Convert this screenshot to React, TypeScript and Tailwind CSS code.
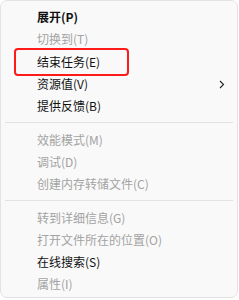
import React from "react";

type Item = { label: string; disabled?: boolean; bold?: boolean; sub?: boolean; boxed?: boolean } | "sep";

const items: Item[] = [
  { label: "展开(P)", bold: true },
  { label: "切换到(T)", disabled: true },
  { label: "结束任务(E)", boxed: true },
  { label: "资源值(V)", sub: true },
  { label: "提供反馈(B)" },
  "sep",
  { label: "效能模式(M)", disabled: true },
  { label: "调试(D)", disabled: true },
  { label: "创建内存转储文件(C)", disabled: true },
  "sep",
  { label: "转到详细信息(G)", disabled: true },
  { label: "打开文件所在的位置(O)", disabled: true },
  { label: "在线搜索(S)" },
  { label: "属性(I)", disabled: true },
];

export default function App() {
  return (
    <div className="w-[239px] h-[300px] bg-white" style={{ fontFamily: '"Noto Sans CJK SC", "Noto Sans", sans-serif' }}>
      <div className="w-[238px] h-[298px] rounded-[7px] border border-[#e3e3e3] bg-[#f9f9f9] pt-[5px] flex flex-col">
        {items.map((it, i) =>
          it === "sep" ? (
            <div key={i} className="h-[11px] flex items-center px-[4px]">
              <div className="h-px w-full bg-[#e2e2e2]" />
            </div>
          ) : (
            <div key={i} className="relative h-[22.3px] flex items-center pl-[36px] pr-[12px]">
              <span
                className={
                  "text-[12px] leading-none " +
                  (it.disabled ? "text-[#a3a3a3]" : "text-[#111]") +
                  (it.bold ? " font-bold" : "")
                }
              >
                {it.label}
              </span>
              {it.sub && (
                <svg className="absolute left-[218px] top-[7px]" width="6" height="9" viewBox="0 0 6 9">
                  <path d="M1 1 L4.5 4.5 L1 8" fill="none" stroke="#222" strokeWidth="1.1" />
                </svg>
              )}
              {it.boxed && (
                <div className="absolute left-[13px] top-[-3px] w-[115px] h-[28px] rounded-[4px] border-[2.5px] border-[#ff1a1a]" />
              )}
            </div>
          )
        )}
      </div>
    </div>
  );
}
